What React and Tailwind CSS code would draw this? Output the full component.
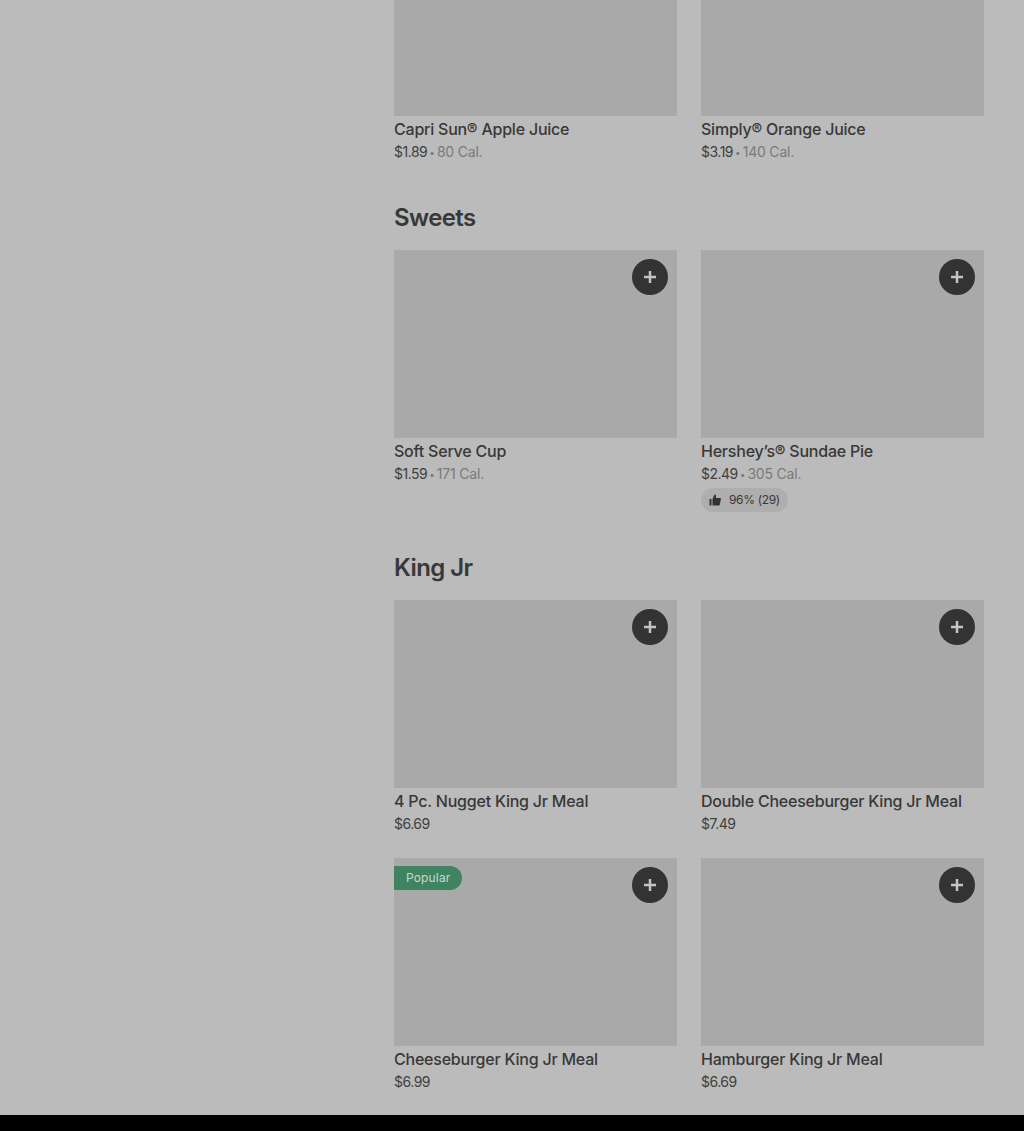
const PlusIcon = () => (
  <svg width="16" height="16" viewBox="0 0 16 16" fill="#c4c4c4">
    <path d="M6.75 2h2.5v4.75H14v2.5H9.25V14h-2.5V9.25H2v-2.5h4.75z" />
  </svg>
);

const ThumbIcon = () => (
  <svg width="12" height="12" viewBox="0 0 12 12" fill="#333333">
    <path d="M0.5 5h2v6.5h-2zM3.5 5l2-4.5c.9 0 1.5.6 1.5 1.5v2h4c.6 0 1 .5.9 1.1l-1 5.4c-.1.6-.5 1-1.1 1H3.5z" />
  </svg>
);

const Item = ({ name, price, cal, rating, badge, imageHeight = 'h-[188px]', noButton }) => (
  <div className="w-[283px]">
    <div className={`relative bg-[#a9a9a9] ${imageHeight}`}>
      {badge && (
        <div className="absolute left-0 top-2 flex h-6 items-center rounded-r-full bg-[#3f8360] px-3 text-[12px] tracking-[0.15px] text-[#c4dccf]">
          {badge}
        </div>
      )}
      {!noButton && (
        <button className="absolute right-[9px] top-[9px] flex h-9 w-9 items-center justify-center rounded-full bg-[#333333]">
          <PlusIcon />
        </button>
      )}
    </div>
    <div className="h-[26px] pt-[1px] text-[16px] font-medium leading-[24px] tracking-[-0.22px] text-[#383838]">{name}</div>
    <div className="flex h-[20px] items-center text-[14px] leading-[20px] text-[#404040]">
      <span className="tracking-[-0.5px]">{price}</span>
      {cal && (
        <>
          <span className="mx-[2px] text-[10px] text-[#7a7a7a]">•</span>
          <span className="tracking-[-0.2px] text-[#7a7a7a]">{cal}</span>
        </>
      )}
    </div>
    {rating && (
      <div className="mt-[4px] flex h-6 w-fit items-center gap-[8px] rounded-full bg-[#aeaeae] px-[8px] text-[12px] tracking-[-0.35px] text-[#383838]">
        <ThumbIcon />
        <span>{rating}</span>
      </div>
    )}
  </div>
);

export default function App() {
  return (
    <div className="flex h-[1131px] flex-col overflow-hidden bg-[#bbbbbb] font-['Inter',sans-serif]">
      <main className="h-[1115px] pl-[394px]">
        <div className="grid w-[590px] grid-cols-[283px_283px] gap-x-[24px]">
          <Item name="Capri Sun® Apple Juice" price="$1.89" cal="80 Cal." imageHeight="h-[116px]" noButton />
          <Item name="Simply® Orange Juice" price="$3.19" cal="140 Cal." imageHeight="h-[116px]" noButton />
        </div>

        <h2 className="mt-[40px] h-[38px] text-[24px] font-semibold leading-[32px] tracking-[-0.6px] text-[#383838]">Sweets</h2>
        <div className="mt-[10px] grid w-[590px] grid-cols-[283px_283px] gap-x-[24px]">
          <Item name="Soft Serve Cup" price="$1.59" cal="171 Cal." />
          <Item name="Hershey’s® Sundae Pie" price="$2.49" cal="305 Cal." rating="96% (29)" />
        </div>

        <h2 className="mt-[40px] h-[38px] text-[24px] font-semibold leading-[32px] tracking-[-0.6px] text-[#383838]">King Jr</h2>
        <div className="mt-[10px] grid w-[590px] grid-cols-[283px_283px] gap-x-[24px] gap-y-[24px]">
          <Item name="4 Pc. Nugget King Jr Meal" price="$6.69" />
          <Item name="Double Cheeseburger King Jr Meal" price="$7.49" />
          <Item name="Cheeseburger King Jr Meal" price="$6.99" badge="Popular" />
          <Item name="Hamburger King Jr Meal" price="$6.69" />
        </div>
      </main>
      <div className="h-4 bg-black" />
    </div>
  );
}
